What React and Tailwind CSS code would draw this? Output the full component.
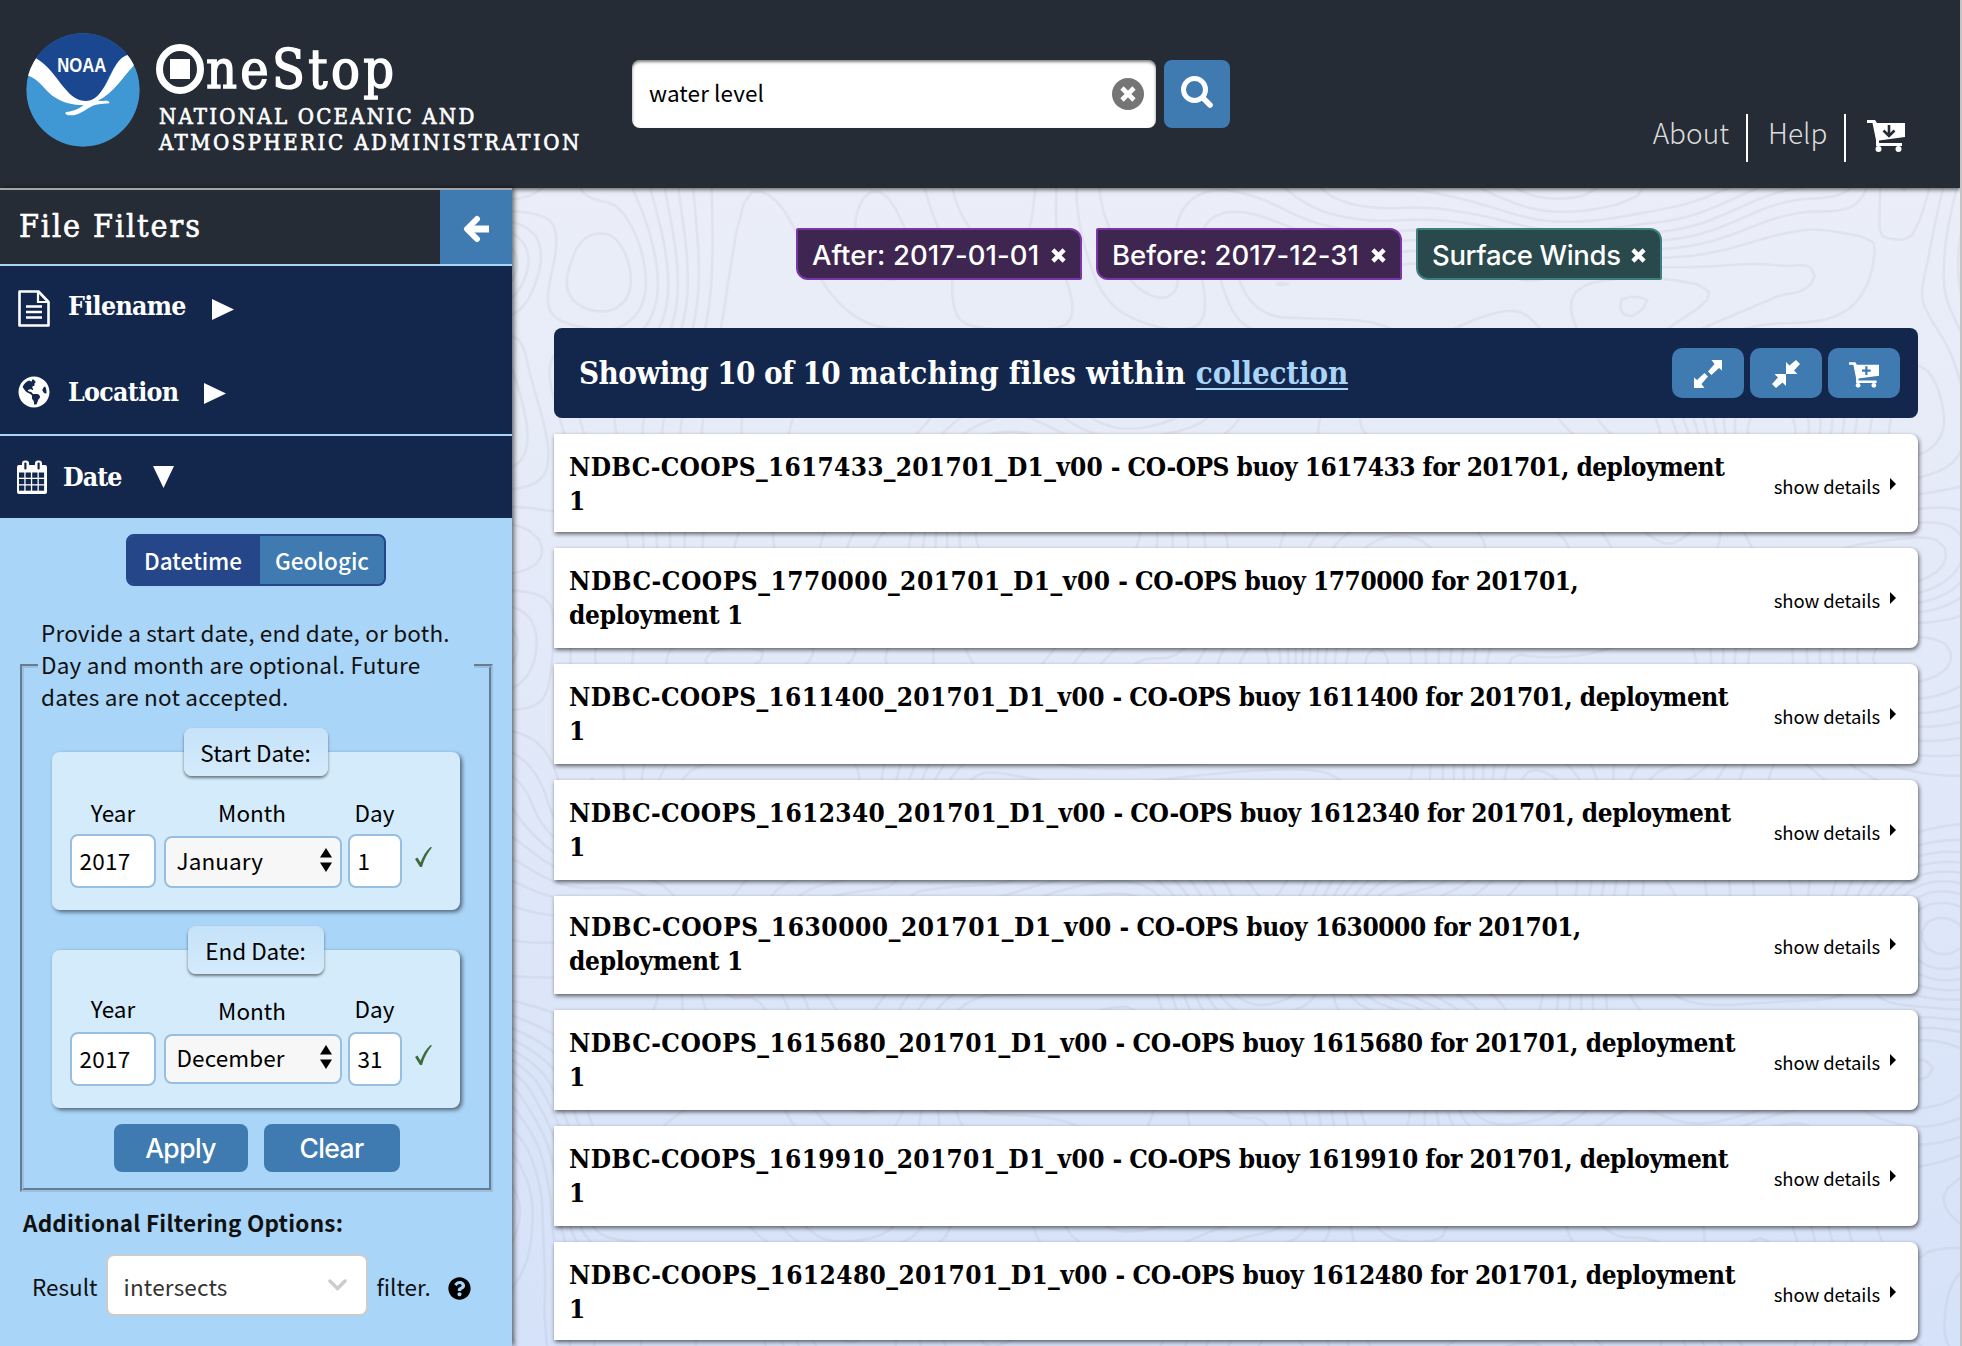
import React from "react";
import { FaGlobeAmericas, FaQuestionCircle } from "react-icons/fa";

const SANS = "font-['Noto_Sans_CJK_SC',sans-serif]";
const SERIF = "font-['DejaVu_Serif_Condensed','DejaVu_Serif',serif]";
const INTER = "font-['Inter',sans-serif]";

function T({ className = "", children }) {
  return <span className={`inline-block whitespace-nowrap ${className}`}>{children}</span>;
}

/* ---------- background contours ---------- */
function hash(x, y) {
  const s = Math.sin(x * 127.1 + y * 311.7) * 43758.5453;
  return s - Math.floor(s);
}
function noise(x, y) {
  const xi = Math.floor(x), yi = Math.floor(y);
  const f = (t) => t * t * (3 - 2 * t);
  const u = f(x - xi), v = f(y - yi);
  const a = hash(xi, yi), b = hash(xi + 1, yi), c = hash(xi, yi + 1), d = hash(xi + 1, yi + 1);
  return a + (b - a) * u + (c - a) * v + (a - b - c + d) * u * v;
}
function contours(w, h, step, levels) {
  const cols = Math.ceil(w / step), rows = Math.ceil(h / step);
  const g = [];
  for (let j = 0; j <= rows; j++) {
    g.push([]);
    for (let i = 0; i <= cols; i++) {
      const x = (i * step) / 130, y = (j * step) / 130;
      const wx = x + 0.5 * noise(x * 0.8 + 4, y * 0.8 + 9);
      const wy = y + 0.5 * noise(x * 0.8 + 31, y * 0.8 + 17);
      g[j].push(noise(wx, wy) * 0.9 + noise(wx * 0.5 + 7, wy * 0.5 + 3) * 0.35);
    }
  }
  let d = "";
  for (let k = 1; k < levels; k++) {
    const t = (k * 1.25) / levels;
    for (let j = 0; j < rows; j++)
      for (let i = 0; i < cols; i++) {
        const p = [[i, j, g[j][i]], [i + 1, j, g[j][i + 1]], [i + 1, j + 1, g[j + 1][i + 1]], [i, j + 1, g[j + 1][i]]];
        const q = [];
        for (let e = 0; e < 4; e++) {
          const a = p[e], b = p[(e + 1) % 4];
          if (a[2] > t !== b[2] > t) {
            const r = (t - a[2]) / (b[2] - a[2]);
            q.push(`${((a[0] + (b[0] - a[0]) * r) * step).toFixed(1)} ${((a[1] + (b[1] - a[1]) * r) * step).toFixed(1)}`);
          }
        }
        for (let m = 0; m + 1 < q.length; m += 2) d += `M${q[m]}L${q[m + 1]}`;
      }
  }
  return d;
}
const TOPO = contours(1450, 1160, 8, 17);

/* ---------- icons ---------- */
function NoaaLogo() {
  return (
    <svg className="mt-[33px] ml-[26px] h-[114px] w-[114px] shrink-0" viewBox="30 27 342 342">
      <defs>
        <clipPath id="disc"><circle cx="201" cy="198" r="170" /></clipPath>
      </defs>
      <g clipPath="url(#disc)">
        <circle cx="201" cy="198" r="171" fill="#3f97d3" />
        <path d="M60 103C110 130 130 190 160 212C185 235 215 238 240 220C275 195 285 110 335 93L345 0H40Z" fill="#1a478f" />
        <path d="M60 103L20 110L25 152L37 155C70 165 90 205 120 222C140 235 170 243 203 244C185 258 165 262 150 265C145 268 150 274 165 274C190 274 205 258 225 248C245 238 270 240 279 238C283 233 275 229 262 231L245 230C290 210 320 160 355 122L352 85L335 93C290 105 285 180 240 220C220 236 200 232 185 226C140 205 120 140 60 103Z" fill="#fff" />
      </g>
      <text x="124" y="143" fill="#fff" fontFamily="Liberation Sans" fontWeight="700" fontSize="60" textLength="147" lengthAdjust="spacingAndGlyphs">NOAA</text>
    </svg>
  );
}
function Cart({ className, children }) {
  return (
    <svg className={className} viewBox="0 0 38 32" fill="currentColor">
      <path d="M0 0H8L10 3H38V17L12 20.5V23H35V26H9V20L5.5 3H0Z" />
      <circle cx="11.500" cy="29" r="3" />
      <circle cx="31.500" cy="29" r="3" />
      {children}
    </svg>
  );
}
function Cross({ className }) {
  return (
    <svg className={className} viewBox="0 0 16 16" stroke="currentColor" strokeWidth="4.600">
      <path d="M2 2L14 14M14 2L2 14" />
    </svg>
  );
}
function DocIcon() {
  return (
    <svg className="h-[37px] w-[32px]" viewBox="0 0 32 37" fill="none" stroke="#fff">
      <path d="M1.500 1.500H20.500L30.500 12V35.500H1.500Z" strokeWidth="2.600" strokeLinejoin="round" />
      <path d="M20 2V12H30" strokeWidth="2.200" />
      <path d="M8 16.500H24M8 22H24M8 27.500H24" strokeWidth="2.400" />
    </svg>
  );
}
function CalendarIcon() {
  return (
    <svg className="h-[34px] w-[30px]" viewBox="0 0 30 34">
      <rect x="0" y="5" width="30" height="29" rx="2" fill="#fff" />
      <rect x="5" y="0.500" width="7" height="11" rx="3" fill="#fff" />
      <rect x="18" y="0.500" width="7" height="11" rx="3" fill="#fff" />
      <rect x="7.300" y="2.500" width="2.200" height="7" rx="1" fill="#13264c" />
      <rect x="20.500" y="2.500" width="2.200" height="7" rx="1" fill="#13264c" />
      {[12.5, 19, 25.5].map((y) =>
        [2, 8.6, 15.2, 21.8].map((x) => <rect key={`${x}-${y}`} x={x} y={y} width="5.300" height="5.200" fill="#13264c" />)
      )}
    </svg>
  );
}
function Tri({ className, d }) {
  return (
    <svg className={className} viewBox="0 0 22 22" preserveAspectRatio="none" fill="currentColor">
      <path d={d} />
    </svg>
  );
}
const RIGHT = "M0 0L22 11L0 22Z";
const DOWN = "M0 0H22L11 22Z";

/* ---------- header ---------- */
function Header() {
  return (
    <header className="relative z-20 flex h-[188px] bg-[#252c36] text-white shadow-[0_2px_4px_rgba(0,0,0,0.55)]">
      <NoaaLogo />
      <div className={`${SERIF} ml-4 w-[476px] shrink-0 pt-[40px] [-webkit-text-stroke:0.6px_white]`}>
        <div className="flex h-[63px] items-start">
          <svg className="mt-[4px] h-[50px] w-[48px] shrink-0" viewBox="0 0 48 50">
            <ellipse cx="24" cy="25" rx="20.500" ry="21.500" fill="none" stroke="#fff" strokeWidth="7" />
            <rect x="14" y="15" width="20" height="20" fill="#fff" />
          </svg>
          <T className="ml-[2px] text-[53.500px] leading-[60px] tracking-[3.3px] [-webkit-text-stroke:1.4px_white]">neStop</T>
        </div>
        <div className="ml-[3px] h-[26px] text-[22px] leading-[27px] tracking-[2.23px] whitespace-nowrap">NATIONAL OCEANIC AND</div>
        <div className="ml-[3px] h-[26px] text-[22px] leading-[27px] tracking-[2.48px] whitespace-nowrap">ATMOSPHERIC ADMINISTRATION</div>
      </div>
      <div className="mt-[60px] flex h-[68px] w-[524px] items-center rounded-lg bg-white pr-[12px] pl-[17px] text-black shadow-[inset_0_2px_3px_rgba(0,0,0,0.5)]">
        <T className={`${SANS} pb-[4px] text-[22.5px] leading-[32px] tracking-[0.1px]`}>water level</T>
        <div className="ml-auto flex h-8 w-8 items-center justify-center rounded-full bg-[#757575] text-white">
          <Cross className="h-[16px] w-[16px]" />
        </div>
      </div>
      <div className="mt-[60px] ml-2 flex h-[68px] w-[66px] items-center justify-center rounded-lg bg-[#3f7bb0]">
        <svg className="-mt-1 h-[32px] w-[32px]" viewBox="0 0 32 32" fill="none" stroke="#fff" strokeLinecap="round">
          <circle cx="13.500" cy="13.500" r="11" strokeWidth="5" />
          <path d="M22 22L29 29" strokeWidth="5.500" />
        </svg>
      </div>
      <nav className={`${SANS} mt-[114px] mr-[55px] ml-auto flex h-[48px] text-[28px] leading-[36px] font-light text-[#dcdcdc]`}>
        <T className="mr-[17px]">About</T>
        <div className="w-[2px] bg-white" />
        <T className="mr-[18px] ml-[20px] w-[58px]">Help</T>
        <div className="w-[2px] bg-white" />
        <Cart className="mt-[6px] ml-[21px] h-[32px] w-[38px] text-white">
          <path d="M22 5V15M16.500 10.500L22 16L27.500 10.500" fill="none" stroke="#252c36" strokeWidth="2.600" />
        </Cart>
      </nav>
    </header>
  );
}

/* ---------- sidebar ---------- */
function DateBox({ title, legend, month, day, labelShift, selectH }) {
  const field = "flex items-center rounded-lg border-2 border-[#98bfe0] leading-[32px]";
  return (
    <div className="mt-4 mr-[2px] flex flex-col items-center">
      <div className={`relative z-10 -mb-6 flex h-12 items-center justify-center rounded-lg bg-linear-to-b from-[#c5e2f9] to-[#d4ebfb] pb-[1px] shadow-[0_2px_3px_rgba(0,0,0,0.5)] ${legend}`}>
        <T>{title}</T>
      </div>
      <div className="flex h-[158px] w-[408px] rounded-lg bg-[#d4ebfb] pt-[44px] pl-[18px] shadow-[2px_2px_4px_rgba(0,0,0,0.55)]">
        <div className="w-[86px]">
          <div className={`h-8 pl-[1px] text-center ${labelShift}`}><T>Year</T></div>
          <div className={`${field} mt-[6px] h-[54px] bg-white pb-[3px] pl-[8px] tracking-[0.3px]`}><T>2017</T></div>
        </div>
        <div className="ml-2 w-[178px]">
          <div className="h-8 pr-[1px] text-center"><T>Month</T></div>
          <div className={`${field} mt-[8px] rounded-[10px] bg-[#f7f7f7] pr-[8px] pl-[11px] tracking-[0.1px] ${selectH}`}>
            <T className="pb-[4px]">{month}</T>
            <svg className="mb-[4px] ml-auto h-[24px] w-[12px]" viewBox="0 0 12 24">
              <path d="M0 9.500L6 0L12 9.500ZM0 14.500H12L6 24Z" />
            </svg>
          </div>
        </div>
        <div className="ml-[6px] w-[54px]">
          <div className={`h-8 text-center ${labelShift}`}><T>Day</T></div>
          <div className={`${field} mt-[6px] h-[54px] bg-white pb-[3px] pl-[8px]`}><T>{day}</T></div>
        </div>
        <svg className="mt-[51px] ml-[13px] h-[20px] w-[17px]" viewBox="0 0 17 20" fill="#3f6b3a">
          <path d="M0 12L2.500 10.500L5.500 15.500C8 9 11 4 15.500 0L17 0.500C12.500 6 9 12.500 7 20H5Z" />
        </svg>
      </div>
    </div>
  );
}

function Sidebar() {
  return (
    <aside className="relative z-30 w-[512px] shrink-0 border-t-2 border-[#a3a5a8] bg-[#a9d5f8] shadow-[2px_0_5px_rgba(0,0,0,0.6)]">
      <div className="flex h-[74px] bg-[#252c36] text-white">
        <T className={`${SERIF} ml-[19px] text-[32px] leading-[73px] tracking-[1.9px] [-webkit-text-stroke:0.6px_white]`}>File Filters</T>
        <div className="ml-auto flex w-[72px] items-center justify-center bg-[#3f7bb0]">
          <svg className="mt-[3px] h-[28px] w-[28px]" viewBox="0 0 28 28" fill="none" stroke="#fff" strokeWidth="7" strokeLinecap="round">
            <path d="M15 4L5 14L15 24" strokeWidth="6" strokeLinejoin="round" />
            <path d="M8 14H27" strokeLinecap="butt" />
          </svg>
        </div>
      </div>
      <div className={`${SERIF} h-[254px] bg-[#13264c] text-[26.5px] font-bold tracking-[-0.7px] text-white`}>
        <div className="flex h-[86px] items-center border-t-2 border-[#a9d5f8] pl-[18px]">
          <DocIcon />
          <T className="ml-[18px] w-[119px] pb-[4px] leading-[40px]">Filename</T>
          <Tri className="mt-[3px] ml-[25px] h-[21px] w-[22px]" d={RIGHT} />
        </div>
        <div className="flex h-[84px] items-center pl-[18px]">
          <FaGlobeAmericas className="h-[32px] w-[32px]" />
          <T className="ml-[18px] w-[110px] leading-[40px]">Location</T>
          <Tri className="mt-[3px] ml-[26px] h-[21px] w-[22px]" d={RIGHT} />
        </div>
        <div className="flex h-[84px] items-center border-t-2 border-[#a9d5f8] pl-[17px]">
          <CalendarIcon />
          <T className="ml-[16px] w-[59px] leading-[40px] tracking-[-1px]">Date</T>
          <Tri className="ml-[31px] h-[22px] w-[21px]" d={DOWN} />
        </div>
      </div>
      <div className={`${SANS} text-[22.5px] leading-[32px] text-black`}>
        <div className="mx-auto mt-4 flex h-[52px] w-[260px] overflow-hidden rounded-lg border-2 border-[#25478a] bg-[#3f7bb0] font-medium text-white">
          <div className="flex w-[132px] items-center bg-[#25478a] pl-[16px]"><T className="tracking-[-0.1px]">Datetime</T></div>
          <div className="flex items-center pl-[15px]"><T>Geologic</T></div>
        </div>
        <div className="mt-[78px] ml-[20px] w-[473px] border-2 border-t-[#637d93] border-r-[#9bbfdd] border-b-[#9bbfdd] border-l-[#637d93]">
          <div className="border-2 border-t-[#9bbfdd] border-r-[#637d93] border-b-[#637d93] border-l-[#9bbfdd] pb-4">
            <p className="-mt-[52px] mr-[15px] ml-[14px] bg-[#a9d5f8] pl-[3px] tracking-[0.2px] text-[#111]">
              <T>Provide a start date, end date, or both.</T>
              <br />
              <T>Day and month are optional. Future</T>
              <br />
              <T>dates are not accepted.</T>
            </p>
            <DateBox title="Start Date:" legend="w-[144px]" month="January" day="1" labelShift="" selectH="h-[52px]" />
            <DateBox title="End Date:" legend="w-[136px]" month="December" day="31" labelShift="relative -top-[2px]" selectH="h-[50px]" />
            <div className={`${INTER} mt-4 flex h-12 justify-center text-[26.5px] leading-[48px] font-medium tracking-[-0.6px] text-white`}>
              <div className="w-[134px] rounded-lg bg-[#3f7bb0] text-center"><T>Apply</T></div>
              <div className="ml-4 w-[136px] rounded-lg bg-[#3f7bb0] text-center"><T>Clear</T></div>
            </div>
          </div>
        </div>
        <div className="mt-[14px] pl-[23px] text-[#111]"><T className="font-bold tracking-[0.22px]">Additional Filtering Options:</T></div>
        <div className="mt-[16px] flex items-center pl-[32px] text-[#111]">
          <T className="pt-[2px]">Result</T>
          <div className="ml-[8px] flex h-[62px] w-[262px] items-center rounded-lg border-2 border-[#ccc] bg-white pr-[19px] pl-[16px] text-[#333]">
            <T className="pt-[2px] tracking-[0.18px]">intersects</T>
            <svg className="ml-auto h-[12px] w-[19px]" viewBox="0 0 19 12" fill="none" stroke="#ccc" strokeWidth="3.500" strokeLinecap="round">
              <path d="M2 2L9.500 9.500L17 2" />
            </svg>
          </div>
          <T className="ml-[9px] pt-[2px]">filter.</T>
          <FaQuestionCircle className="mt-[6px] ml-[17px] h-[23px] w-[23px] text-black" />
        </div>
      </div>
    </aside>
  );
}

/* ---------- results ---------- */
const ROWS = [
  { id: "1617433", wrap: false, box: "h-[98px] pt-[16px]", name: "tracking-[0.28px]", rest: "tracking-[-0.52px]" },
  { id: "1770000", wrap: true, box: "h-[100px] pt-[16px]", name: "tracking-[0.51px]", rest: "tracking-[-0.46px]" },
  { id: "1611400", wrap: false, box: "h-[100px] pt-[16px]", name: "tracking-[0.33px]", rest: "tracking-[-0.47px]" },
  { id: "1612340", wrap: false, box: "h-[100px] pt-[16px]", name: "tracking-[0.36px]", rest: "tracking-[-0.44px]" },
  { id: "1630000", wrap: true, box: "h-[98px] pt-[14px]", name: "tracking-[0.55px]", rest: "tracking-[-0.42px]" },
  { id: "1615680", wrap: false, box: "h-[100px] pt-[16px]", name: "tracking-[0.42px]", rest: "tracking-[-0.38px]" },
  { id: "1619910", wrap: false, box: "h-[100px] pt-[16px]", name: "tracking-[0.33px]", rest: "tracking-[-0.47px]" },
  { id: "1612480", wrap: false, box: "h-[98px] pt-[16px]", name: "tracking-[0.42px]", rest: "tracking-[-0.38px]" },
];

function Tag({ children, className }) {
  return (
    <div className={`flex h-[52px] items-center justify-between rounded-[2px] rounded-tr-[12px] rounded-bl-[12px] border-2 pr-[14px] pl-[14px] text-[27.5px] font-medium text-white ${className}`}>
      <T className="pt-[4px]">{children}</T>
      <Cross className="mt-[2px] h-[15px] w-[15px]" />
    </div>
  );
}

function Results() {
  return (
    <main className="relative flex-1 bg-linear-to-b from-[#ebeef8] to-[#d6e2f9]">
      <svg className="absolute inset-0 h-full w-full" fill="none">
        <path d={TOPO} stroke="#8e94a6" strokeWidth="2.600" strokeLinecap="round" opacity="0.11" />
      </svg>
      <div className="relative pr-[42px] pl-[42px]">
        <div className={`${INTER} ml-[242px] flex pt-[40px]`}>
          <Tag className="w-[286px] border-[#7a35a8] bg-[#3e2650] tracking-[0.07px]">After: 2017-01-01</Tag>
          <Tag className="ml-[14px] w-[306px] border-[#7a35a8] bg-[#3e2650] tracking-[0.02px]">Before: 2017-12-31</Tag>
          <Tag className="ml-[14px] w-[246px] border-[#3b7f80] bg-[#2a494c] tracking-[-0.35px]">Surface Winds</Tag>
        </div>
        <div className="mt-12 flex h-[90px] items-center rounded-lg bg-[#13264c] pr-[18px] pl-[25px] text-white">
          <h1 className={`${SERIF} text-[31px] leading-[40px] font-bold whitespace-nowrap`}>
            <span className="tracking-[-0.6px]">Showing 10 of 10 </span>
            <span className="tracking-[0.18px]">matching files within</span>
            <T className="ml-[10px] tracking-[-0.16px] text-[#a9d5f8] underline decoration-2 underline-offset-4">collection</T>
          </h1>
          <div className="ml-auto flex gap-[6px]">
            <div className="flex h-[50px] w-[72px] items-center justify-center rounded-[10px] bg-[#3f7bb0]">
              <svg className="mt-[2px] h-[28px] w-[28px]" viewBox="0 0 28 28" fill="#fff">
                <path d="M17.500 0H28V10.500L25 8L17.500 15L14 11.500L20.500 4ZM10.500 28H0V17.500L3 20L10.500 13L14 16.500L7.500 24Z" />
              </svg>
            </div>
            <div className="flex h-[50px] w-[72px] items-center justify-center rounded-[10px] bg-[#3f7bb0]">
              <svg className="mt-[2px] h-[28px] w-[28px]" viewBox="0 0 28 28" fill="#fff">
                <path d="M14 14V2L17.500 5.500L24 0L28 4L22 10.500L25.500 14ZM14 14V26L10.500 22.500L4 28L0 24L6 17.500L2.500 14Z" />
              </svg>
            </div>
            <div className="flex h-[50px] w-[72px] items-center justify-center rounded-[10px] bg-[#3f7bb0]">
              <Cart className="mt-[4px] h-[26px] w-[30px]">
                <path d="M22 5V16M16.500 10.500H27.500" stroke="#3f7bb0" strokeWidth="2.800" />
              </Cart>
            </div>
          </div>
        </div>
        <div className="mt-4 flex flex-col gap-4">
          {ROWS.map(({ id, wrap, box, name, rest }) => (
            <div key={id} className={`flex rounded-r-lg bg-white text-black shadow-[1px_2px_4px_rgba(0,0,0,0.6)] ${box}`}>
              <h2 className={`${SERIF} ml-[15px] text-[26px] leading-[34px] font-bold whitespace-nowrap`}>
                <span className={name}>{`NDBC-COOPS_${id}_201701_D1_v00`}</span>
                <span className={rest}>{` - CO-OPS buoy ${id} for 201701,${wrap ? "" : " deployment"}`}</span>
                <br />
                <span className="tracking-[-0.29px]">{wrap ? "deployment 1" : "1"}</span>
              </h2>
              <T className={`${SANS} mt-[21px] mr-[10px] ml-auto text-[18.5px] leading-[30px] tracking-[-0.1px]`}>show details</T>
              <Tri className="mt-[28px] mr-[22px] h-[12px] w-[6px]" d={RIGHT} />
            </div>
          ))}
        </div>
      </div>
    </main>
  );
}

export default function App() {
  return (
    <div className="flex h-[1346px] w-[1962px] overflow-hidden bg-[#c4c4c4]">
      <div className="flex w-[1960px] flex-col overflow-hidden">
        <Header />
        <div className="flex h-[1158px]">
          <Sidebar />
          <Results />
        </div>
      </div>
    </div>
  );
}
